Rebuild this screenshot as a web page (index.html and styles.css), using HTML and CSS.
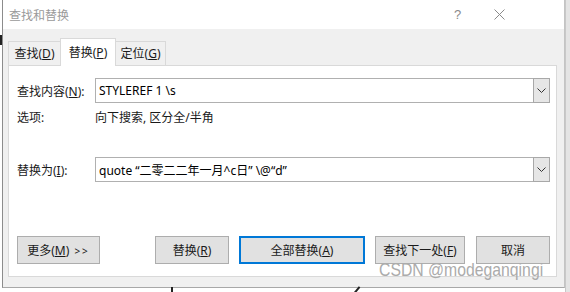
FILE: index.html
```html
<!DOCTYPE html>
<html lang="zh-CN">
<head>
    <meta charset="UTF-8">
    <title>查找和替换</title>
    <link rel="stylesheet" href="styles.css">
</head>
<body>
    <div class="desk">
        <div class="mark mark-left"></div>
        <div class="mark mark-bottom"></div>
        <div class="mark mark-slash"></div>
        <div class="side-strip"></div>

        <div class="dialog">
            <div class="titlebar">
                <span class="title">查找和替换</span>
                <span class="help">?</span>
                <span class="close">
                    <svg width="11" height="11" viewBox="0 0 11 11">
                        <path d="M0.5 0.5 L10.5 10.5 M10.5 0.5 L0.5 10.5" stroke="#8a8a8a" stroke-width="1" fill="none"/>
                    </svg>
                </span>
            </div>

            <div class="content">
                <div class="tabs">
                    <div class="tab">查找(<u>D</u>)</div>
                    <div class="tab active">替换(<u>P</u>)</div>
                    <div class="tab">定位(<u>G</u>)</div>
                </div>

                <div class="panel">
                    <div class="row">
                        <label class="label">查找内容(<u>N</u>):</label>
                        <div class="combo">
                            <span class="value">STYLEREF 1 \s</span>
                            <span class="drop">
                                <svg width="9" height="5" viewBox="0 0 9 5">
                                    <path d="M0.5 0.5 L4.5 4.5 L8.5 0.5" stroke="#333" stroke-width="1" fill="none"/>
                                </svg>
                            </span>
                        </div>
                    </div>

                    <div class="row options">
                        <span class="label">选项:</span>
                        <span class="opt-text">向下搜索, 区分全/半角</span>
                    </div>

                    <div class="row replace">
                        <label class="label">替换为(<u>I</u>):</label>
                        <div class="combo">
                            <span class="value">quote “二零二二年一月^c日” \@“d”</span>
                            <span class="drop">
                                <svg width="9" height="5" viewBox="0 0 9 5">
                                    <path d="M0.5 0.5 L4.5 4.5 L8.5 0.5" stroke="#333" stroke-width="1" fill="none"/>
                                </svg>
                            </span>
                        </div>
                    </div>

                    <div class="buttons">
                        <button class="btn btn-more">更多(<u>M</u>) <span class="arrows">&gt;&gt;</span></button>
                        <button class="btn btn-replace">替换(<u>R</u>)</button>
                        <button class="btn btn-all">全部替换(<u>A</u>)</button>
                        <button class="btn btn-next">查找下一处(<u>F</u>)</button>
                        <button class="btn btn-cancel">取消</button>
                    </div>
                </div>
            </div>
        </div>

        <div class="watermark">CSDN @modeganqingi</div>
    </div>
</body>
</html>
```

FILE: styles.css
```css
body {
    margin: 0;
    background: #fff;
    font-family: "Noto Sans", "Noto Sans CJK SC", sans-serif;
    font-size: 12px;
    color: #1a1a1a;
}
.desk {
    position: relative;
    width: 570px;
    height: 292px;
    overflow: hidden;
}

/* bits of the document behind the dialog */
.mark {
    position: absolute;
    background: #222;
}
.mark-left {
    left: 0;
    top: 35px;
    width: 2px;
    height: 10px;
}
.mark-bottom {
    left: 171px;
    top: 287px;
    width: 2px;
    height: 6px;
}
.mark-slash {
    left: 356px;
    top: 286px;
    width: 2px;
    height: 8px;
    transform: rotate(40deg);
}
.side-strip {
    position: absolute;
    left: 565px;
    top: 0;
    width: 5px;
    height: 292px;
    background: #e4e4e4;
    border-left: 1px solid #c8c8c8;
}

.dialog {
    margin-left: 2px;
    width: 561px;
    height: 287px;
    background: #f0f0f0;
    border-left: 1px solid #8c8c8c;
    border-right: 1px solid #c4c4c4;
    border-bottom: 1px solid #a8a8a8;
}
.titlebar {
    height: 29px;
    background: #fff;
    display: flex;
    align-items: center;
    padding-left: 6px;
}
.title {
    color: #9a9a9a;
    font-size: 12px;
    flex: 1;
}
.help {
    color: #8a8a8a;
    font-size: 13px;
    width: 40px;
    font-family: "Liberation Sans", sans-serif;
}
.close {
    width: 70px;
    display: flex;
}

.content {
    padding: 9px 7px 0 5px;
}
.tabs {
    display: flex;
    align-items: flex-end;
    height: 27px;
}
.tab {
    height: 23px;
    line-height: 23px;
    border: 1px solid #d9d9d9;
    border-bottom: none;
    background: #f0f0f0;
    text-align: center;
}
.tab:first-child {
    width: 51px;
    border-right: none;
}
.tab.active {
    width: 54px;
    height: 27px;
    line-height: 28px;
    background: #fff;
    position: relative;
    top: 1px;
    z-index: 1;
}
.tab:last-child {
    width: 49px;
    border-left: none;
}

.panel {
    background: #fff;
    border: 1px solid #d9d9d9;
    padding: 12px 6px 0 8px;
    box-sizing: border-box;
    height: 212px;
}
.row {
    display: flex;
    align-items: center;
}
.label {
    width: 78px;
    flex: none;
}
.combo {
    flex: 1;
    height: 25px;
    box-sizing: border-box;
    border: 1px solid #b0b0b0;
    display: flex;
    align-items: center;
}
.value {
    flex: 1;
    padding-left: 3px;
    font-size: 12px;
    color: #000;
    white-space: nowrap;
}
.drop {
    width: 17px;
    height: 25px;
    margin: -1px -1px -1px 0;
    box-sizing: border-box;
    border: 1px solid #a8a8a8;
    background: #e6e6e6;
    display: flex;
    align-items: center;
    justify-content: center;
}
.options {
    margin-top: 6px;
    height: 16px;
}
.replace {
    margin-top: 32px;
}

.buttons {
    display: flex;
    gap: 10px;
    margin-top: 54px;
}
.btn {
    height: 28px;
    box-sizing: border-box;
    border: 1px solid #adadad;
    background: #e1e1e1;
    font-family: inherit;
    font-size: 12px;
    color: #1a1a1a;
    padding: 0;
}
.arrows {
    font-size: 10px;
    letter-spacing: 2px;
    margin-left: 2px;
}
.btn-more {
    width: 83px;
    margin-right: auto;
}
.btn-replace {
    width: 74px;
}
.btn-all {
    width: 126px;
    border: 2px solid #0078d7;
}
.btn-next {
    width: 90px;
}
.btn-cancel {
    width: 74px;
    margin-left: 1px;
}

.watermark {
    position: absolute;
    left: 379px;
    top: 259px;
    font-family: "Liberation Sans", sans-serif;
    font-size: 19px;
    color: #ababab;
    white-space: nowrap;
    transform: scaleX(0.83);
    transform-origin: left top;
}
```
